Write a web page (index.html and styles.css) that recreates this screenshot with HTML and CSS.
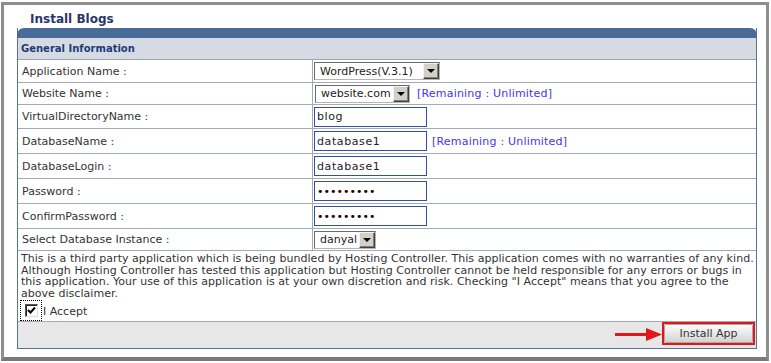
FILE: index.html
```html
<!DOCTYPE html>
<html lang="en">
<head>
    <meta charset="UTF-8">
    <title>Install Blogs</title>
    <link rel="stylesheet" href="styles.css">
</head>
<body>
    <div class="frame">
        <h1 class="page-title">Install Blogs</h1>
        <div class="panel">
            <div class="panel-cap"></div>
            <div class="section">General Information</div>

            <div class="row h22">
                <div class="label">Application Name :</div>
                <div class="value">
                    <span class="combo w-app"><span class="combo-text">WordPress(V.3.1)</span><span class="drop"></span></span>
                </div>
            </div>
            <div class="row h22">
                <div class="label">Website Name :</div>
                <div class="value">
                    <span class="combo w-site"><span class="combo-text">website.com</span><span class="drop"></span></span>
                    <span class="remaining">[Remaining : Unlimited]</span>
                </div>
            </div>
            <div class="row h24">
                <div class="label">VirtualDirectoryName :</div>
                <div class="value"><input class="field" type="text" value="blog"></div>
            </div>
            <div class="row h25">
                <div class="label">DatabaseName :</div>
                <div class="value">
                    <input class="field" type="text" value="database1">
                    <span class="remaining narrow">[Remaining : Unlimited]</span>
                </div>
            </div>
            <div class="row h25">
                <div class="label">DatabaseLogin :</div>
                <div class="value"><input class="field" type="text" value="database1"></div>
            </div>
            <div class="row h25">
                <div class="label">Password :</div>
                <div class="value"><input class="field pass" type="password" value="123456789"></div>
            </div>
            <div class="row h25">
                <div class="label">ConfirmPassword :</div>
                <div class="value"><input class="field pass" type="password" value="123456789"></div>
            </div>
            <div class="row h22">
                <div class="label">Select Database Instance :</div>
                <div class="value">
                    <span class="combo w-db"><span class="combo-text">danyal</span><span class="drop"></span></span>
                </div>
            </div>

            <div class="disclaimer">
                <p>This is a third party application which is being bundled by Hosting Controller. This application comes with no warranties of any kind.
                Although Hosting Controller has tested this application but Hosting Controller cannot be held responsible for any errors or bugs in
                this application. Your use of this application is at your own discretion and risk. Checking "I Accept" means that you agree to the
                above disclaimer.</p>
                <label class="accept">
                    <span class="focus-ring">
                        <span class="check">
                            <svg width="9" height="9" viewBox="0 0 9 9"><path d="M1 4 L3.5 6.5 L8 1.5" fill="none" stroke="#000" stroke-width="2"/></svg>
                        </span>
                    </span>
                    <span class="accept-text">I Accept</span>
                </label>
            </div>

            <div class="actions">
                <svg class="arrow" width="47" height="15" viewBox="0 0 47 15">
                    <rect x="0" y="6" width="33" height="3" fill="#e0161b"/>
                    <polygon points="31,1 47,7.5 31,14" fill="#e0161b"/>
                </svg>
                <span class="btn-ring"><button class="btn">Install App</button></span>
            </div>
        </div>
    </div>
</body>
</html>
```

FILE: styles.css
```css
body {
    margin: 0;
    background-color: #fff;
    font-family: "DejaVu Sans", Verdana, sans-serif;
    font-size: 11px;
    color: #333;
}
.frame {
    box-sizing: border-box;
    width: 768px;
    height: 359px;
    margin: 2px 0 0 1px;
    border: 3px solid #8e8e8e;
    border-bottom-color: #7a7a7a;
    border-bottom-width: 4px;
}
.page-title {
    margin: 7px 0 0 26px;
    font-size: 12px;
    line-height: 15px;
    color: #2a3668;
}
.panel {
    width: 740px;
    margin: 1px 0 0 13px;
    box-sizing: border-box;
    border: 1px solid #57739c;
    border-top: none;
}
.panel-cap {
    height: 10px;
    margin: 0 -1px;
    background-color: #486b98;
    border-radius: 7px 7px 0 0;
}
.section {
    height: 22px;
    box-sizing: border-box;
    padding: 0 0 0 3px;
    line-height: 21px;
    background-color: #d6dbe3;
    border-bottom: 1px solid #9ca4b3;
    font-size: 10px;
    font-weight: bold;
    color: #1d3a78;
}
.row {
    display: flex;
    box-sizing: border-box;
    border-top: 1px solid #a3aab7;
}
.section + .row {
    border-top: none;
}
.h22 { height: 22px; }
.h24 { height: 24px; }
.h25 { height: 25px; }
.label {
    width: 295px;
    box-sizing: border-box;
    padding-left: 4px;
    border-right: 1px solid #a3aab7;
    display: flex;
    align-items: center;
}
.value {
    flex: 1;
    padding-left: 1px;
    display: flex;
    align-items: center;
}
.combo {
    display: inline-flex;
    align-items: center;
    box-sizing: border-box;
    height: 18px;
    border: 1px solid #6b6b6b;
    border-right-color: #b5b5b5;
    border-bottom-color: #b5b5b5;
    background-color: #fff;
}
.w-app { width: 126px; }
.w-site { width: 95px; margin-left: 1px; }
.w-db { width: 62px; }
.combo-text {
    flex: 1;
    padding-left: 5px;
    font-size: 11px;
    color: #222;
    white-space: nowrap;
    overflow: hidden;
}
.drop {
    position: relative;
    flex: none;
    width: 16px;
    height: 16px;
    box-sizing: border-box;
    background-color: #d4d0c8;
    border: 1px solid;
    border-color: #f4f4f4 #404040 #404040 #f4f4f4;
    box-shadow: inset -1px -1px 0 #808080;
}
.drop::after {
    content: "";
    position: absolute;
    left: 3px;
    top: 5px;
    border-left: 4px solid transparent;
    border-right: 4px solid transparent;
    border-top: 4px solid #000;
}
.remaining {
    margin-left: 7px;
    color: #4136f0;
    letter-spacing: 0.2px;
}
.remaining.narrow {
    margin-left: 5px;
}
.field {
    box-sizing: border-box;
    width: 113px;
    height: 20px;
    margin: 0;
    padding: 0 2px;
    border: 1px solid #344f9e;
    font-family: "DejaVu Sans", Verdana, sans-serif;
    font-size: 11px;
    letter-spacing: 0.6px;
    color: #222;
    outline: none;
}
.pass {
    color: #1a0000;
    letter-spacing: 0;
}
.disclaimer {
    height: 71px;
    box-sizing: border-box;
    padding: 2px 2px 0 3px;
    border-top: 1px solid #a3aab7;
}
.disclaimer p {
    margin: 0;
    line-height: 11.7px;
    color: #333;
    letter-spacing: 0.04px;
}
.accept {
    display: flex;
    align-items: center;
    margin-left: -1px;
}
.accept-text {
    margin-left: 1px;
    padding-top: 2px;
}
.focus-ring {
    box-sizing: border-box;
    width: 22px;
    height: 21px;
    border: 1px dotted #000;
    padding: 3px 0 0 4px;
}
.check {
    display: flex;
    align-items: center;
    justify-content: center;
    box-sizing: border-box;
    width: 13px;
    height: 13px;
    background-color: #fff;
    border: 1px solid;
    border-color: #555 #ddd #ddd #555;
    box-shadow: inset 1px 1px 0 #222;
}
.actions {
    height: 27px;
    box-sizing: border-box;
    border-top: 1px solid #a3aab7;
    background-color: #e7e7e7;
    display: flex;
    justify-content: flex-end;
    align-items: flex-start;
    padding-right: 1px;
}
.arrow {
    margin-top: 5px;
}
.btn-ring {
    display: block;
    border: 2px solid #e0161b;
}
.btn {
    display: block;
    width: 89px;
    height: 19px;
    margin: 0;
    padding: 0;
    border: 1px solid #a8a8a8;
    border-radius: 2px;
    background: linear-gradient(#fbfbfb, #e8e8e8 50%, #d3d3d3);
    font-family: "DejaVu Sans", Verdana, sans-serif;
    font-size: 11px;
    color: #333;
}
```
